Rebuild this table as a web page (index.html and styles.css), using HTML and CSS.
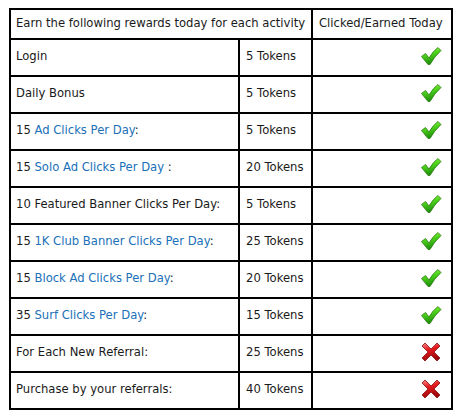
FILE: index.html
```html
<!DOCTYPE html>
<html>
<head>
<meta charset="utf-8">
<link rel="stylesheet" href="styles.css">
</head>
<body>
<svg width="0" height="0" class="defs">
  <defs>
    <linearGradient id="gchk" x1="0" y1="0" x2="0.3" y2="1">
      <stop offset="0" stop-color="#b6ff6a"/>
      <stop offset="0.45" stop-color="#4fd61c"/>
      <stop offset="1" stop-color="#1f8c0b"/>
    </linearGradient>
    <linearGradient id="gx" x1="0" y1="0" x2="0.3" y2="1">
      <stop offset="0" stop-color="#ff8a8a"/>
      <stop offset="0.45" stop-color="#e3191d"/>
      <stop offset="1" stop-color="#9c0a0c"/>
    </linearGradient>
    <symbol id="chk" viewBox="0 0 22 22">
      <path d="M1.5 11.5 L5.5 8.5 L9 13 Q13 6 18 2.5 L21 5.5 Q14 12 10 19.5 L8 19.5 Z" fill="url(#gchk)" stroke="#2a7a12" stroke-width="0.8" stroke-linejoin="round"/>
    </symbol>
    <symbol id="xx" viewBox="0 0 22 22">
      <path d="M2 5 L5 2 L11 8 L17 2 L20 5 L14 11 L20 17 L17 20 L11 14 L5 20 L2 17 L8 11 Z" fill="url(#gx)" stroke="#8a1010" stroke-width="0.8" stroke-linejoin="round"/>
    </symbol>
  </defs>
</svg>
<table class="rewards">
  <tr class="head">
    <th colspan="2" class="c1">Earn the following rewards today for each activity</th>
    <th class="c3">Clicked/Earned Today</th>
  </tr>
  <tr><td>Login</td><td>5 Tokens</td><td class="st"><svg class="ic"><use href="#chk"/></svg></td></tr>
  <tr><td>Daily Bonus</td><td>5 Tokens</td><td class="st"><svg class="ic"><use href="#chk"/></svg></td></tr>
  <tr><td>15 <a href="#">Ad Clicks Per Day</a>:</td><td>5 Tokens</td><td class="st"><svg class="ic"><use href="#chk"/></svg></td></tr>
  <tr><td>15 <a href="#">Solo Ad Clicks Per Day</a> :</td><td>20 Tokens</td><td class="st"><svg class="ic"><use href="#chk"/></svg></td></tr>
  <tr><td>10 Featured Banner Clicks Per Day:</td><td>5 Tokens</td><td class="st"><svg class="ic"><use href="#chk"/></svg></td></tr>
  <tr><td>15 <a href="#">1K Club Banner Clicks Per Day</a>:</td><td>25 Tokens</td><td class="st"><svg class="ic"><use href="#chk"/></svg></td></tr>
  <tr><td>15 <a href="#">Block Ad Clicks Per Day</a>:</td><td>20 Tokens</td><td class="st"><svg class="ic"><use href="#chk"/></svg></td></tr>
  <tr><td>35 <a href="#">Surf Clicks Per Day</a>:</td><td>15 Tokens</td><td class="st"><svg class="ic"><use href="#chk"/></svg></td></tr>
  <tr><td>For Each New Referral:</td><td>25 Tokens</td><td class="st"><svg class="ic"><use href="#xx"/></svg></td></tr>
  <tr><td>Purchase by your referrals:</td><td>40 Tokens</td><td class="st"><svg class="ic"><use href="#xx"/></svg></td></tr>
</table>
</body>
</html>
```
FILE: styles.css
```css
html, body { margin: 0; padding: 0; background: #fff; }
body { font-family: "DejaVu Sans", Verdana, sans-serif; font-size: 11.6px; color: #1a1a1a; }
.defs { position: absolute; width: 0; height: 0; }
.rewards {
  border-collapse: collapse;
  margin: 8px 0 0 9px;
  width: 444px;
}
.rewards th, .rewards td {
  border: 2px solid #000;
  text-align: left;
  font-weight: normal;
  padding: 0 5px 4px;
  height: 31px;
  vertical-align: middle;
  white-space: nowrap;
}
.rewards th { height: 25px; padding-bottom: 3px; }
.rewards td:nth-child(1) { width: 217px; }
.rewards td:nth-child(2) { width: 60px; padding-left: 6px; }
.rewards th.c3 { padding-left: 6px; }
.rewards td.st { text-align: right; padding-right: 9px; }
.rewards a { color: #2070b8; text-decoration: none; }
.ic { width: 22px; height: 22px; display: inline-block; vertical-align: middle; }
```
